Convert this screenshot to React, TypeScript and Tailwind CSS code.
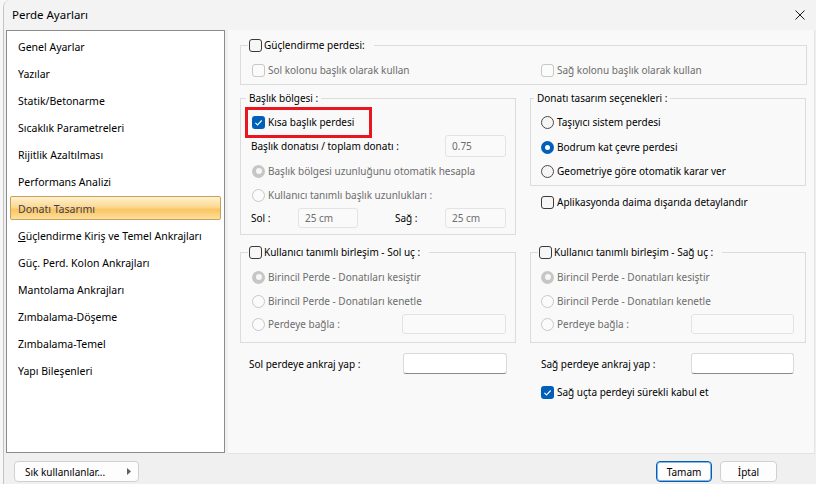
import React from 'react';

type BoxProps = { checked?: boolean; disabled?: boolean };

const CheckBox: React.FC<BoxProps> = ({ checked = false, disabled = false }) => {
  if (checked) {
    return (
      <span className="flex h-[13px] w-[13px] shrink-0 items-center justify-center rounded-[3px] bg-[#005fb8]">
        <svg width="13" height="13" viewBox="0 0 13 13">
          <path d="M3.4 6.8 5.5 8.9 9.7 4.5" fill="none" stroke="#fff" strokeWidth="1.1" />
        </svg>
      </span>
    );
  }
  return (
    <span
      className={
        disabled
          ? 'h-[13px] w-[13px] shrink-0 rounded-[3px] border border-[#c8c8c8] bg-[#fbfbfb]'
          : 'h-[13px] w-[13px] shrink-0 rounded-[3px] border border-[#3a3a3a] bg-[#f6f6f6]'
      }
    />
  );
};

const Radio: React.FC<BoxProps> = ({ checked = false, disabled = false }) => {
  if (checked && !disabled) {
    return (
      <span className="flex h-[13px] w-[13px] shrink-0 items-center justify-center rounded-full bg-[#005fb8]">
        <span className="h-[5px] w-[5px] rounded-full bg-white" />
      </span>
    );
  }
  if (checked) {
    return (
      <span className="flex h-[13px] w-[13px] shrink-0 items-center justify-center rounded-full bg-[#c6c6c6]">
        <span className="h-[6px] w-[6px] rounded-full bg-[#f6f6f6]" />
      </span>
    );
  }
  return (
    <span
      className={
        disabled
          ? 'h-[13px] w-[13px] shrink-0 rounded-full border border-[#c8c8c8] bg-[#fbfbfb]'
          : 'h-[13px] w-[13px] shrink-0 rounded-full border border-[#4a4a4a] bg-[#f5f5f5]'
      }
    />
  );
};

const Option: React.FC<{ kind: 'check' | 'radio'; label: string; checked?: boolean; disabled?: boolean; className?: string }> = ({
  kind,
  label,
  checked,
  disabled,
  className = '',
}) => (
  <div className={`flex h-[16px] items-center gap-[3px] ${disabled ? 'text-[#6d6d6d]' : 'text-black'} ${className}`}>
    {kind === 'check' ? <CheckBox checked={checked} disabled={disabled} /> : <Radio checked={checked} disabled={disabled} />}
    <span className="whitespace-nowrap">{label}</span>
  </div>
);

const TextBox: React.FC<{ value?: string; disabled?: boolean; className?: string }> = ({ value = '', disabled, className = '' }) => (
  <div
    className={
      disabled
        ? `flex shrink-0 items-center rounded-[3px] border border-[#e3e3e3] bg-[#fafafa] pl-[6px] text-[#6d6d6d] ${className}`
        : `flex shrink-0 items-center rounded-[3px] border border-[#dadada] border-b-[#8a8a8a] bg-white pl-[6px] ${className}`
    }
  >
    {value}
  </div>
);

const Group: React.FC<{ legend: React.ReactNode; className?: string; legendClass?: string; children: React.ReactNode }> = ({
  legend,
  className = '',
  legendClass = '',
  children,
}) => (
  <fieldset className={`min-w-0 border border-[#dcdcdc] ${className}`}>
    <legend className={legendClass}>
      <div className="flex h-[16px] items-center gap-[2px] whitespace-nowrap">{legend}</div>
    </legend>
    {children}
  </fieldset>
);

const menu = [
  'Genel Ayarlar',
  'Yazılar',
  'Statik/Betonarme',
  'Sıcaklık Parametreleri',
  'Rijitlik Azaltılması',
  'Performans Analizi',
  'Donatı Tasarımı',
  'Güçlendirme Kiriş ve Temel Ankrajları',
  'Güç. Perd. Kolon Ankrajları',
  'Mantolama Ankrajları',
  'Zımbalama-Döşeme',
  'Zımbalama-Temel',
  'Yapı Bileşenleri',
];

export default function App() {
  return (
    <div className="flex h-[484px] w-[816px] overflow-hidden bg-[#f7f7f7] font-['Noto_Sans',sans-serif] text-[10px] leading-[16px] text-black">
      <div className="w-[3px] shrink-0" />
      <div className="flex min-w-0 flex-1 flex-col rounded-tl-[7px] border-l border-[#c4c4c4] bg-[#f0f0f0]">
        {/* title bar */}
        <div className="flex h-[30px] shrink-0 items-center justify-between rounded-tl-[7px] bg-[#f3f3f3] pl-[8px] pr-[11px]">
          <span className="text-[11.5px]">Perde Ayarları</span>
          <svg width="10" height="10" viewBox="0 0 10 10">
            <path d="M0.5 0.5 9.5 9.5M9.5 0.5 0.5 9.5" stroke="#1a1a1a" strokeWidth="1" />
          </svg>
        </div>

        <div className="flex h-[424px] shrink-0 items-start">
          {/* sidebar */}
          <div className="ml-[2px] h-[423px] w-[219px] shrink-0 border border-[#8c8c8c] bg-white pt-[3px] text-[10.5px]">
            {menu.map((m) => {
              const sel = m === 'Donatı Tasarımı';
              return (
                <div
                  key={m}
                  className={
                    sel
                      ? 'mx-[3px] mb-[3px] flex h-[24px] items-center rounded-[2px] border border-[#c99f5a] bg-[linear-gradient(to_bottom,#fff1d0_0%,#fdd992_45%,#f9c560_58%,#fde0a0_100%)] pl-[7px] pt-[1px] text-[#3c3c58]'
                      : 'mx-[3px] mb-[3px] flex h-[24px] items-center border border-transparent pl-[7px] pt-[1px]'
                  }
                >
                  {m.startsWith('Güçlendirme') ? (
                    <span>
                      <span className="underline">G</span>
                      {m.slice(1)}
                    </span>
                  ) : (
                    m
                  )}
                </div>
              );
            })}
          </div>

          {/* content */}
          <div className="ml-[3px] mr-[1px] h-[424px] min-w-0 flex-1 border-b border-r border-[#e3e3e3] bg-[#f9f9f9] pl-[12px] pt-[7px]">
            <Group
              className="w-[567px] pb-[6px] pt-[9px]"
              legendClass="ml-[7px] pl-[1px] pr-[9px]"
              legend={
                <>
                  <CheckBox />
                  <span>Güçlendirme perdesi:</span>
                </>
              }
            >
              <div className="grid grid-cols-[289px_1fr] pl-[11px]">
                <Option kind="check" label="Sol kolonu başlık olarak kullan" disabled />
                <Option kind="check" label="Sağ kolonu başlık olarak kullan" disabled />
              </div>
            </Group>

            <div className="mt-[5px] grid grid-cols-[276px_276px] gap-x-[14px] gap-y-[9px] items-start">
              {/* Başlık bölgesi */}
              <Group className="pb-[6px]" legendClass="ml-[5px] px-[3px]" legend={<span>Başlık bölgesi :</span>}>
                <div className="relative mt-[8px] pl-[11px]">
                  <Option kind="check" label="Kısa başlık perdesi" checked />
                  <div className="absolute left-[4px] top-[-7px] h-[31px] w-[127px] border-[3px] border-[#e9161f]" />
                </div>
                <div className="mt-[5px] flex h-[22px] items-center justify-between pl-[10px] pr-[9px]">
                  <span>Başlık donatısı / toplam donatı :</span>
                  <TextBox value="0.75" disabled className="h-[22px] w-[61px]" />
                </div>
                <Option kind="radio" label="Başlık bölgesi uzunluğunu otomatik hesapla" checked disabled className="mt-[6px] pl-[11px]" />
                <Option kind="radio" label="Kullanıcı tanımlı başlık uzunlukları :" disabled className="mt-[8px] pl-[11px]" />
                <div className="mt-[5px] flex h-[20px] items-center pl-[10px] pr-[9px]">
                  <span className="w-[47px]">Sol :</span>
                  <TextBox value="25 cm" disabled className="h-[20px] w-[60px]" />
                  <span className="ml-[37px]">Sağ :</span>
                  <TextBox value="25 cm" disabled className="ml-auto h-[20px] w-[61px]" />
                </div>
              </Group>

              {/* Donatı tasarım seçenekleri */}
              <div>
                <Group className="pb-[6px]" legendClass="ml-[3px] px-[3px]" legend={<span>Donatı tasarım seçenekleri :</span>}>
                  <Option kind="radio" label="Taşıyıcı sistem perdesi" className="mt-[8px] pl-[10px]" />
                  <Option kind="radio" label="Bodrum kat çevre perdesi" checked className="mt-[9px] pl-[10px]" />
                  <Option kind="radio" label="Geometriye göre otomatik karar ver" className="mt-[8px] pl-[10px]" />
                </Group>
                <Option kind="check" label="Aplikasyonda daima dışarıda detaylandır" className="mt-[8px] pl-[11px]" />
              </div>

              {/* Sol uç */}
              <Group
                className="pb-[8px]"
                legendClass="ml-[7px] pl-[1px] pr-[9px]"
                legend={
                  <>
                    <CheckBox />
                    <span>Kullanıcı tanımlı birleşim - Sol uç :</span>
                  </>
                }
              >
                <Option kind="radio" label="Birincil Perde - Donatıları kesiştir" checked disabled className="mt-[9px] pl-[11px]" />
                <Option kind="radio" label="Birincil Perde - Donatıları kenetle" disabled className="mt-[8px] pl-[11px]" />
                <div className="mt-[5px] flex h-[20px] items-center pl-[11px] pr-[9px]">
                  <Option kind="radio" label="Perdeye bağla :" disabled />
                  <TextBox disabled className="ml-auto h-[20px] w-[104px]" />
                </div>
              </Group>

              {/* Sağ uç */}
              <Group
                className="pb-[8px]"
                legendClass="ml-[7px] pl-[1px] pr-[9px]"
                legend={
                  <>
                    <CheckBox />
                    <span>Kullanıcı tanımlı birleşim - Sağ uç :</span>
                  </>
                }
              >
                <Option kind="radio" label="Birincil Perde - Donatıları kesiştir" checked disabled className="mt-[9px] pl-[10px]" />
                <Option kind="radio" label="Birincil Perde - Donatıları kenetle" disabled className="mt-[8px] pl-[10px]" />
                <div className="mt-[5px] flex h-[20px] items-center pl-[10px] pr-[11px]">
                  <Option kind="radio" label="Perdeye bağla :" disabled />
                  <TextBox disabled className="ml-auto h-[20px] w-[103px]" />
                </div>
              </Group>

              <div className="mt-[1px] flex h-[21px] items-center pl-[9px] pr-[9px]">
                <span>Sol perdeye ankraj yap :</span>
                <TextBox className="ml-auto h-[21px] w-[104px]" />
              </div>

              <div className="mt-[1px]">
                <div className="flex h-[21px] items-center pl-[11px] pr-[12px]">
                  <span>Sağ perdeye ankraj yap :</span>
                  <TextBox className="ml-auto h-[21px] w-[103px]" />
                </div>
                <Option kind="check" label="Sağ uçta perdeyi sürekli kabul et" checked className="mt-[10px] pl-[11px]" />
              </div>
            </div>
          </div>
        </div>

        {/* bottom buttons */}
        <div className="flex flex-1 items-start pt-[7px]">
          <button className="ml-[10px] flex h-[21px] w-[125px] items-center justify-between rounded-[4px] border border-[#d0d0d0] bg-[#fdfdfd] pl-[10px] pr-[7px]">
            <span>Sık kullanılanlar...</span>
            <svg width="4" height="7" viewBox="0 0 4 7">
              <path d="M0 0 4 3.5 0 7z" fill="#606060" />
            </svg>
          </button>
          <div className="ml-auto mr-[39px] flex gap-[8px]">
            <button className="flex h-[21px] w-[56px] items-center justify-center rounded-[4px] border border-[#005fb8] bg-[#fdfdfd] shadow-[inset_0_0_0_1px_rgba(0,95,184,0.45)]">
              Tamam
            </button>
            <button className="flex h-[21px] w-[57px] items-center justify-center rounded-[4px] border border-[#d0d0d0] bg-[#fdfdfd]">
              İptal
            </button>
          </div>
        </div>
      </div>
    </div>
  );
}
